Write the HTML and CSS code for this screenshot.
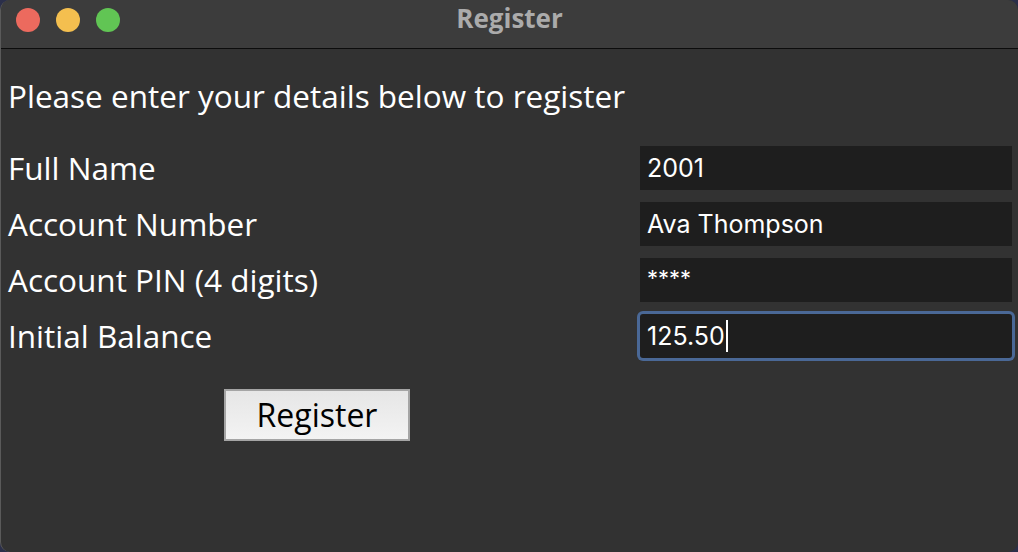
FILE: index.html
```html
<!DOCTYPE html>
<html>
<head>
<meta charset="utf-8">
<link rel="stylesheet" href="styles.css">
</head>
<body>
<div class="window">
  <div class="titlebar">
    <div class="lights">
      <span class="light red"></span>
      <span class="light yellow"></span>
      <span class="light green"></span>
    </div>
    <div class="title">Register</div>
  </div>
  <div class="content">
    <div class="heading">Please enter your details below to register</div>
    <div class="form">
      <div class="label">Full Name</div>
      <div class="entry">2001</div>
      <div class="label">Account Number</div>
      <div class="entry">Ava Thompson</div>
      <div class="label">Account PIN (4 digits)</div>
      <div class="entry pin">****</div>
      <div class="label">Initial Balance</div>
      <div class="entry focused">125.50<span class="caret"></span></div>
    </div>
    <div class="actions">
      <button class="btn">Register</button>
    </div>
  </div>
</div>
</body>
</html>
```

FILE: styles.css
```css
html, body {
  margin: 0;
  padding: 0;
  background: #2b2f4a;
}
body {
  width: 1018px;
  height: 552px;
  overflow: hidden;
}
.window {
  width: 1018px;
  height: 552px;
  box-sizing: border-box;
  background: #323232;
  border-radius: 10px;
  overflow: hidden;
  display: flex;
  flex-direction: column;
  border-left: 1px solid #5a5a5a;
}
.titlebar {
  height: 48px;
  flex: none;
  background: #3c3c3c;
  border-bottom: 1px solid #0c0c0c;
  position: relative;
  display: flex;
  align-items: flex-start;
  justify-content: center;
}
.lights {
  position: absolute;
  left: 15px;
  top: 8px;
  display: flex;
  gap: 16px;
}
.light {
  width: 24px;
  height: 24px;
  border-radius: 50%;
  display: block;
}
.red { background: #ec6a5e; }
.yellow { background: #f4bf4f; }
.green { background: #61c554; }
.title {
  font-family: "Open Sans", "Liberation Sans", sans-serif;
  font-weight: 700;
  font-size: 26px;
  color: #ababab;
  line-height: 36px;
  margin-top: 0;
}
.content {
  padding: 25px 6px 0 7px;
  font-family: "Open Sans", "Noto Sans", sans-serif;
  color: #ffffff;
}
.heading {
  font-size: 31.5px;
  line-height: 44px;
  height: 44px;
}
.form {
  margin-top: 28px;
  display: grid;
  grid-template-columns: 1fr 372px;
  grid-auto-rows: 44px;
  row-gap: 12px;
}
.label {
  font-size: 31.5px;
  line-height: 44px;
}
.entry {
  background: #1e1e1e;
  font-family: "Inter", "Roboto", sans-serif;
  font-size: 25px;
  line-height: 44px;
  padding-left: 7px;
  color: #ffffff;
  position: relative;
}
.entry.pin {
  font-size: 22px;
  line-height: 40px;
}
.entry.focused {
  box-shadow: 0 0 0 3px #4a6896;
  border-radius: 3px;
}
.caret {
  display: inline-block;
  width: 2px;
  height: 32px;
  background: #ffffff;
  vertical-align: middle;
  margin-left: 1px;
  position: relative;
  top: -2px;
}
.actions {
  margin-top: 31px;
  padding-left: 216px;
}
.btn {
  width: 186px;
  height: 52px;
  border: 2px solid #a5a5a5;
  background: linear-gradient(#e6e6e6, #f3f3f3);
  font-family: "Open Sans", "Noto Sans", sans-serif;
  font-size: 32px;
  line-height: 44px;
  color: #000000;
  padding: 0;
  margin: 0;
  border-radius: 0;
}
```
